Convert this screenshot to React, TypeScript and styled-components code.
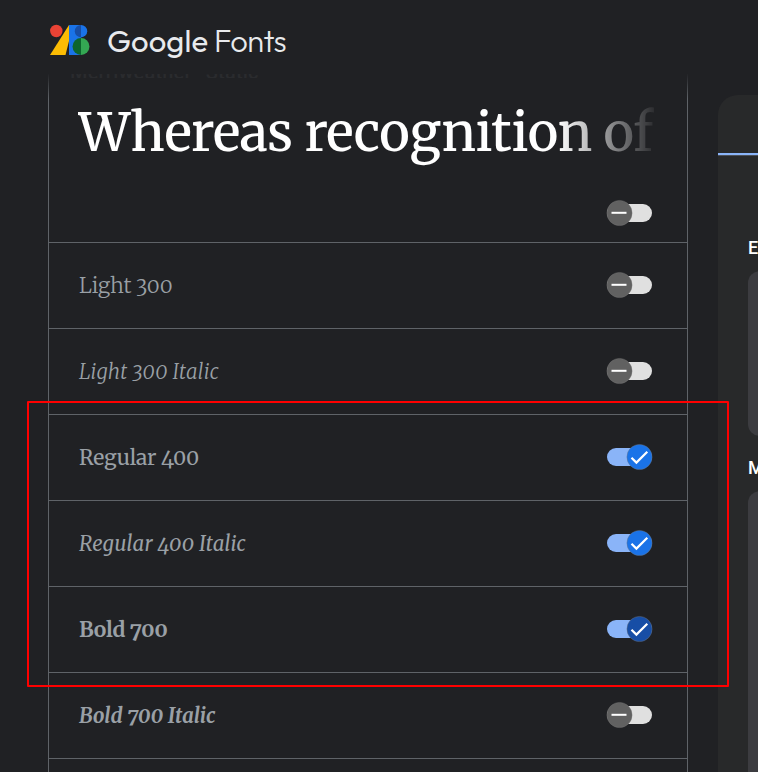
import React from 'react';
import styled, { createGlobalStyle } from 'styled-components';

const serif = `Merriweather, 'DejaVu Serif Condensed', 'DejaVu Serif', serif`;

const GlobalStyle = createGlobalStyle`
  * { box-sizing: border-box; }
  body { margin: 0; background: #202124; overflow: hidden; }
`;

const Page = styled.div`
  position: relative;
  display: flex;
  flex-direction: column;
  width: 758px;
  height: 772px;
  overflow: hidden;
  background: #202124;
`;

const Header = styled.header`
  display: flex;
  flex: none;
  align-items: flex-start;
  height: 74px;
  padding: 24px 0 0 49px;
`;

const Wordmark = styled.div`
  display: flex;
  margin: -1px 0 0 17px;
  font-family: 'Product Sans', 'Google Sans', Outfit, Lato, sans-serif;
  font-size: 31px;
  line-height: 36px;
  color: #e8eaed;
  white-space: nowrap;
`;

const WordmarkPart = styled.span<{ $weight: number; $width: number; $tracking: number }>`
  width: ${(p) => p.$width}px;
  font-weight: ${(p) => p.$weight};
  letter-spacing: ${(p) => p.$tracking}px;
`;

const Body = styled.main`
  display: flex;
  flex: 1;
  min-height: 0;
`;

const StyleList = styled.section`
  display: flex;
  flex: none;
  flex-direction: column;
  width: 640px;
  height: 698px;
  margin-left: 48px;
  border: solid #5f6368;
  border-width: 0 1px;
  border-image: linear-gradient(#202124 0, #5f6368 26px, #5f6368 100%) 1;
  border-image-width: 0 1px;
`;

const Preview = styled.div`
  display: flex;
  flex: none;
  flex-direction: column;
  height: 169px;
  border-bottom: 1px solid #5f6368;
`;

const FadedCaption = styled.div`
  display: flex;
  align-items: flex-end;
  gap: 14px;
  height: 4px;
  margin-left: 21px;
  overflow: hidden;
  font: 500 20px/12px Roboto, sans-serif;
  color: #2a2b2e;
  letter-spacing: 0.2px;
`;

const Specimen = styled.div`
  width: 576px;
  height: 86px;
  margin: 12px 0 0 29px;
  overflow: hidden;
  font-family: ${serif};
  font-optical-sizing: none;
  font-size: 52px;
  font-weight: 470;
  line-height: 86px;
  letter-spacing: -0.47px;
  white-space: nowrap;
  color: #fff;
  mask-image: linear-gradient(to right, #000 480px, transparent 582px);
`;

const PreviewAction = styled.div`
  display: flex;
  justify-content: flex-end;
  margin-top: 24px;
  padding-right: 35px;
`;

const Row = styled.div`
  display: flex;
  flex: none;
  align-items: center;
  justify-content: space-between;
  height: 86px;
  padding: 0 35px 1px 30px;
  border-bottom: 1px solid #5f6368;
`;

const Label = styled.span<{ $weight: number; $italic?: boolean; $tracking: number }>`
  padding-top: 1px;
  font-family: ${serif};
  font-optical-sizing: none;
  font-variant-numeric: oldstyle-nums;
  font-size: ${(p) => (p.$italic ? 20.4 : 21)}px;
  font-weight: ${(p) => p.$weight};
  font-style: ${(p) => (p.$italic ? 'italic' : 'normal')};
  line-height: 32px;
  letter-spacing: ${(p) => p.$tracking}px;
  white-space: nowrap;
  color: #9aa0a6;
`;

const Knob = styled.svg`
  display: block;
  flex: none;
  overflow: visible;
`;

const Side = styled.aside`
  flex: none;
  width: 60px;
  height: 677px;
  margin: 21px 0 0 30px;
  border-top-left-radius: 20px;
  background: #28292a;
  overflow: hidden;
`;

const TabStrip = styled.div`
  height: 60px;
  border-bottom: 2px solid #8ab4f8;
  box-shadow: 0 1px 0 #4c5058;
`;

const CodeTitle = styled.div<{ $top: number }>`
  height: 20px;
  margin: ${(p) => p.$top}px 0 0 30px;
  font: 500 18px/20px Roboto, sans-serif;
  color: #fff;
`;

const CodeBox = styled.div<{ $height: number; $top: number }>`
  height: ${(p) => p.$height}px;
  margin: ${(p) => p.$top}px 0 0 30px;
  border-radius: 12px 0 0 12px;
  background: #3c3c40;
`;

const Highlight = styled.div`
  position: absolute;
  left: 27px;
  top: 401px;
  width: 702px;
  height: 286px;
  border: 2px solid #f00;
  border-radius: 1px;
`;

const FontsLogo = () => (
  <svg width="41" height="32" viewBox="0 0 41 32">
    <path d="M1 31 20 1v16l-3.500 14z" fill="#fbbc04" />
    <circle cx="7.3" cy="7" r="6.2" fill="#ea4335" />
    <path d="M20 1h12v30H20z" fill="#1a73e8" />
    <path d="M32 1a6.2 6.2 0 0 1 0 12.4z" fill="#1a73e8" />
    <path d="M32 1a6.2 6.2 0 0 0 0 12.4z" fill="#174ea6" />
    <path d="M32 14a8.400 8.400 0 0 1 0 16.900z" fill="#34a853" />
    <path d="M32 14a8.400 8.400 0 0 0 0 16.900z" fill="#0d652d" />
  </svg>
);

const Toggle = ({ on = false, active = false }: { on?: boolean; active?: boolean }) => (
  <Knob width="45" height="26" viewBox="0 0 45 26" role="switch" aria-checked={on}>
    <rect x="0" y="4" width="45" height="18" rx="9" fill={on ? '#8ab4f8' : '#e0e0e0'} />
    <circle
      cx={on ? 32.5 : 12.5}
      cy="13"
      r="12.6"
      fill={on ? (active ? '#174ea6' : '#1a73e8') : '#616161'}
      stroke="#777"
      strokeWidth=".4"
    />
    {on ? (
      <path d="m24.500 13.700 4.900 4.900L40.300 7.700" fill="none" stroke="#fff" strokeWidth="2.2" />
    ) : (
      <path d="M4.500 12.800h15" fill="none" stroke="#fff" strokeWidth="2" />
    )}
  </Knob>
);

type FontStyle = {
  name: string;
  weight: number;
  italic?: boolean;
  on?: boolean;
  active?: boolean;
  tracking: number;
};

const fontStyles: FontStyle[] = [
  { name: 'Light 300', weight: 300, tracking: 0 },
  { name: 'Light 300 Italic', weight: 300, italic: true, tracking: 0.32 },
  { name: 'Regular 400', weight: 400, on: true, tracking: -0.18 },
  { name: 'Regular 400 Italic', weight: 400, italic: true, on: true, tracking: 0.2 },
  { name: 'Bold 700', weight: 700, on: true, active: true, tracking: -0.3 },
  { name: 'Bold 700 Italic', weight: 700, italic: true, tracking: 0.02 },
];

export default function App() {
  return (
    <Page>
      <GlobalStyle />
      <Header>
        <FontsLogo />
        <Wordmark>
          <WordmarkPart $weight={450} $width={107} $tracking={0.1}>Google</WordmarkPart>
          <WordmarkPart $weight={300} $width={72} $tracking={-0.6}>Fonts</WordmarkPart>
        </Wordmark>
      </Header>
      <Body>
        <StyleList>
          <Preview>
            <FadedCaption>
              <span>Merriweather</span>
              <span>Static</span>
            </FadedCaption>
            <Specimen>Whereas recognition of</Specimen>
            <PreviewAction>
              <Toggle />
            </PreviewAction>
          </Preview>
          {fontStyles.map((item) => (
            <Row key={item.name}>
              <Label $weight={item.weight} $italic={item.italic} $tracking={item.tracking}>
                {item.name}
              </Label>
              <Toggle on={item.on} active={item.active} />
            </Row>
          ))}
        </StyleList>
        <Side>
          <TabStrip />
          <CodeTitle $top={83}>E</CodeTitle>
          <CodeBox $top={13} $height={165} />
          <CodeTitle $top={22}>M</CodeTitle>
          <CodeBox $top={13} $height={300} />
        </Side>
      </Body>
      <Highlight />
    </Page>
  );
}
